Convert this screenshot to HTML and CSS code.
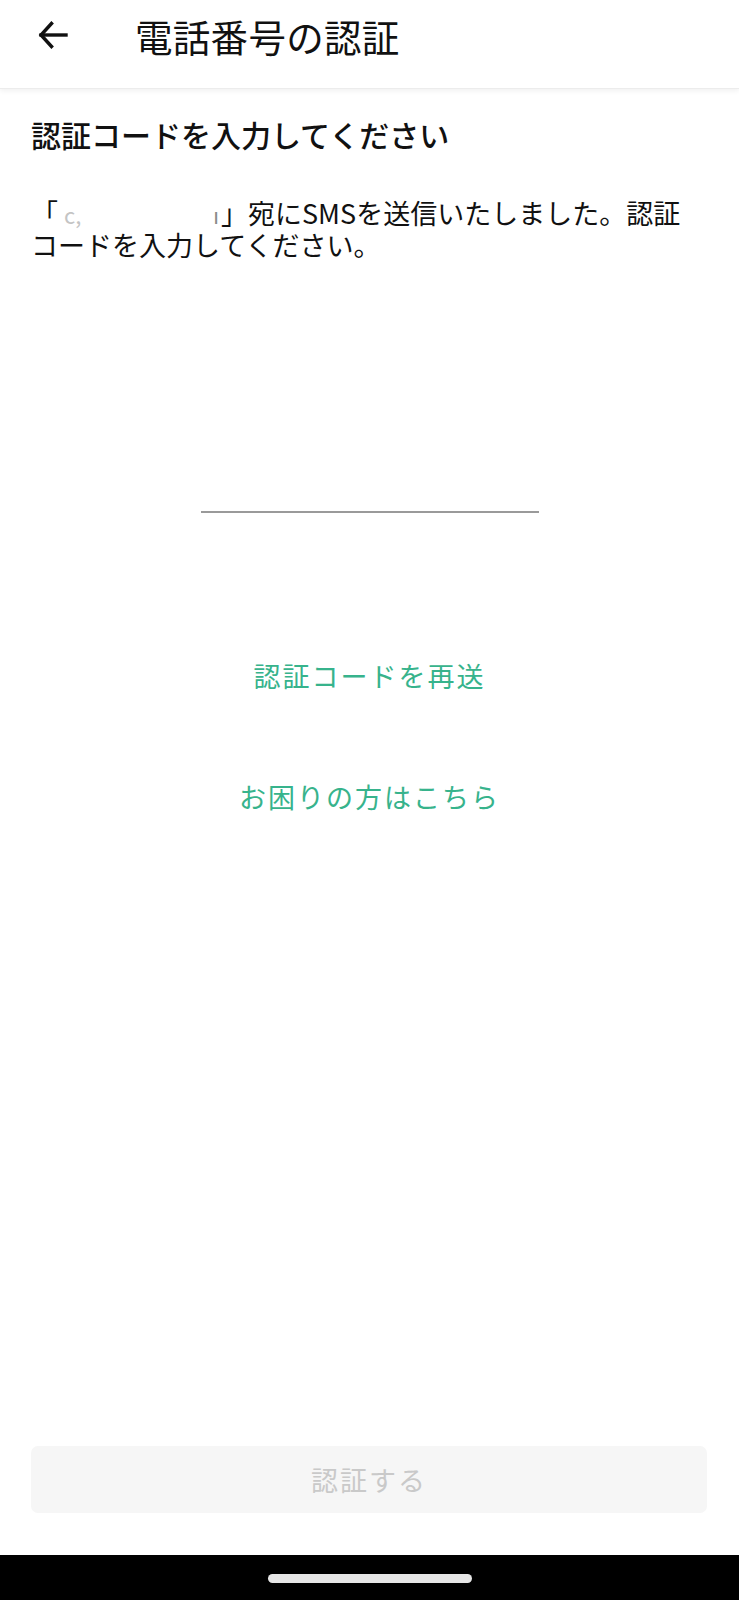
FILE: index.html
```html
<!DOCTYPE html>
<html lang="ja">
<head>
<meta charset="utf-8">
<title>電話番号の認証</title>
<link rel="stylesheet" href="styles.css">
</head>
<body>
<div class="screen">
  <header class="appbar">
    <button class="back" aria-label="戻る">
      <svg width="32" height="30" viewBox="0 0 32 30" fill="none" stroke="#111" stroke-width="3.4" stroke-linecap="square">
        <path d="M4 15 H29"/>
        <path d="M14.5 3.5 L4 15 L14.5 26.5"/>
      </svg>
    </button>
    <h1 class="title">電話番号の認証</h1>
  </header>
  <main class="content">
    <h2 class="heading">認証コードを入力してください</h2>
    <div class="desc">
      <div class="line first">
        <span class="br">「</span><span class="peek">c,</span><span class="gap"></span><span class="peek2">ı</span><span class="rest">」宛にSMSを送信いたしました。認証</span>
      </div>
      <div class="line">コードを入力してください。</div>
    </div>
    <div class="code-field"><div class="underline"></div></div>
    <a class="link resend">認証コードを再送</a>
    <a class="link help">お困りの方はこちら</a>
  </main>
  <div class="footer">
    <button class="submit" disabled>認証する</button>
  </div>
  <div class="navbar"><div class="handle"></div></div>
</div>
</body>
</html>
```
FILE: styles.css
```css
* { box-sizing: border-box; }
html, body { margin: 0; padding: 0; background: #fff; }
body {
  font-family: "Noto Sans CJK JP", "Noto Sans", sans-serif;
  color: #111;
  width: 739px;
  height: 1600px;
  overflow: hidden;
}
.screen {
  display: flex;
  flex-direction: column;
  height: 1600px;
}
.appbar {
  height: 89px;
  display: flex;
  align-items: center;
  padding: 0 0 18px 37px;
  border-bottom: 1px solid #ececec;
  box-shadow: 0 2px 5px rgba(0,0,0,0.06);
  position: relative;
  z-index: 1;
}
.back {
  border: 0;
  background: none;
  padding: 0;
  width: 32px;
  height: 30px;
  display: flex;
}
.title {
  margin: 0 0 0 66px;
  font-size: 37.5px;
  font-weight: 400;
  letter-spacing: 0.3px;
  color: #111;
}
.content {
  flex: 1;
  display: flex;
  flex-direction: column;
  padding: 0 31px;
}
.heading {
  margin: 17px 0 0;
  font-size: 30px;
  font-weight: 500;
  line-height: 56px;
}
.desc {
  margin: 35px 0 0;
  font-size: 27px;
  line-height: 32px;
  font-weight: 400;
  display: flex;
  flex-direction: column;
}
.line {
  white-space: nowrap;
}
.first {
  display: flex;
  align-items: baseline;
  height: 32px;
}
.peek {
  margin-left: 6px;
  color: #c4c4c4;
  font-size: 22px;
  line-height: 22px;
}
.gap {
  display: inline-block;
  width: 132px;
  height: 1px;
}
.peek2 {
  margin-right: 2px;
  color: #8a8a8a;
  font-size: 22px;
  line-height: 22px;
}
.code-field {
  display: flex;
  justify-content: center;
  margin-top: 250px;
}
.underline {
  width: 338px;
  height: 2px;
  background: #9a9a9a;
}
.link {
  align-self: center;
  color: #37b38c;
  font-size: 27px;
  letter-spacing: 2px;
  line-height: 40px;
  text-decoration: none;
}
.resend { margin-top: 143px; }
.help { margin-top: 81px; }
.footer {
  padding: 0 32px 42px 31px;
}
.submit {
  width: 100%;
  height: 67px;
  border: 0;
  border-radius: 7px;
  background: #f6f6f6;
  color: #c9c9c9;
  font-family: "Noto Sans CJK JP", "Noto Sans", sans-serif;
  font-size: 27px;
  letter-spacing: 2px;
}
.navbar {
  height: 45px;
  background: #000;
  display: flex;
  justify-content: center;
  padding-top: 19px;
}
.handle {
  width: 204px;
  height: 9px;
  border-radius: 5px;
  background: #e6e6e6;
}
```
